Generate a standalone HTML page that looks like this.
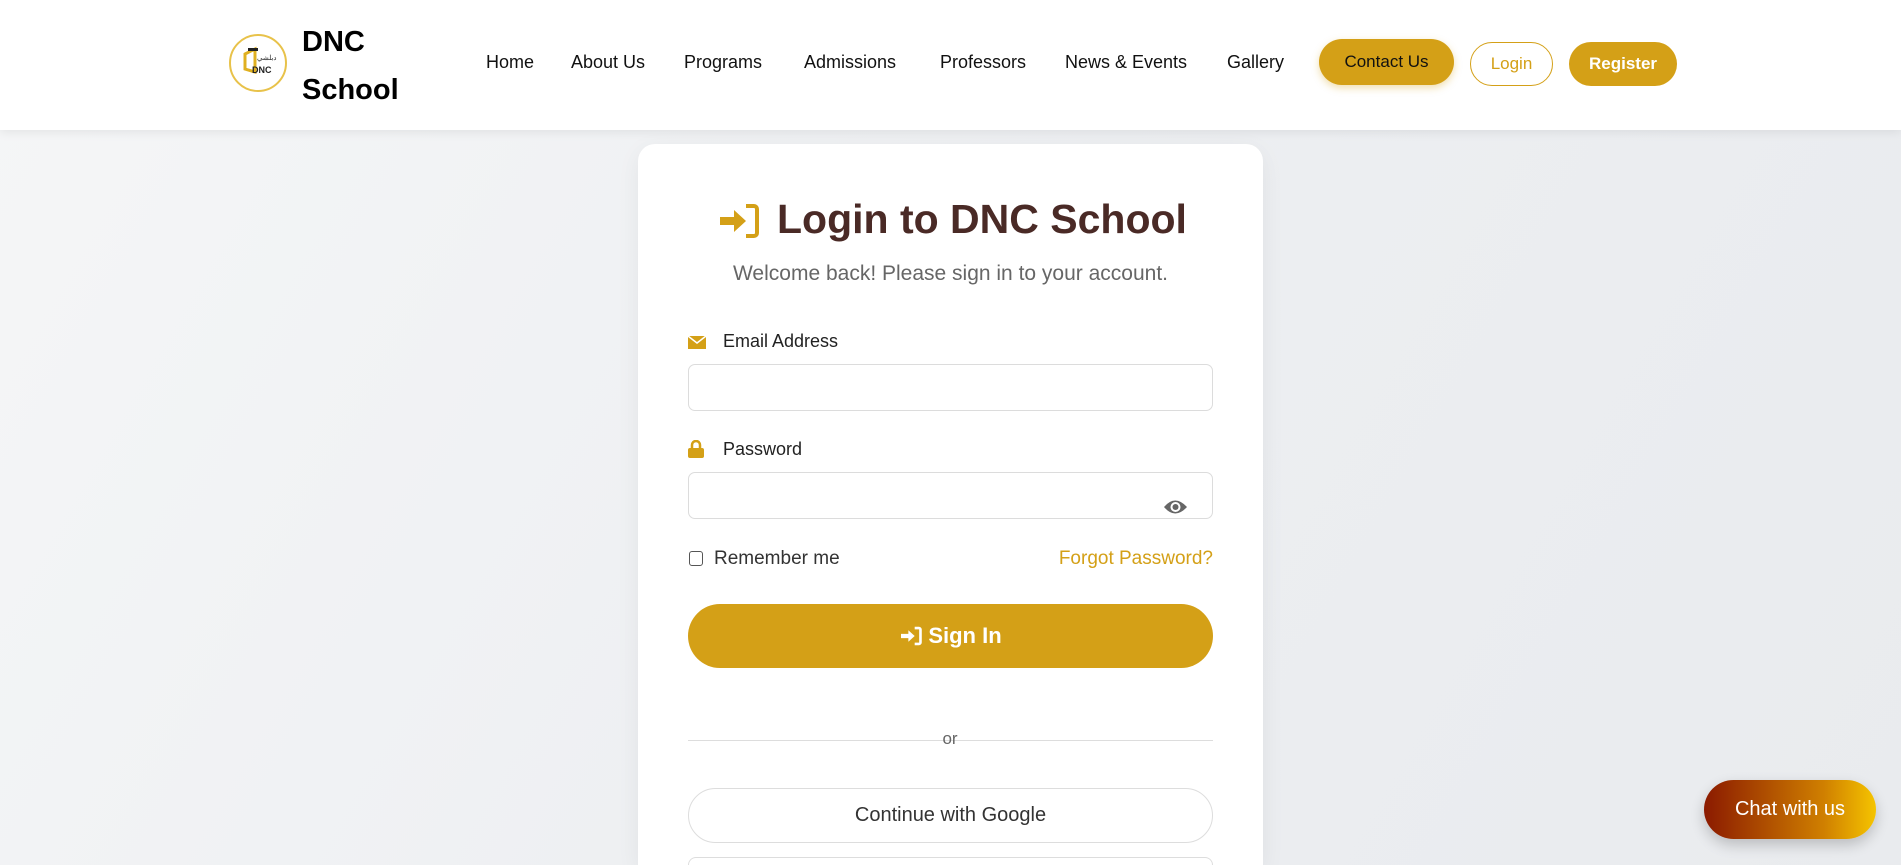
<!DOCTYPE html>
<html style="background:#eef0f2"><head><meta charset="utf-8">
<style>
*{box-sizing:border-box;margin:0;padding:0}
html,body{width:1901px;height:865px;overflow:hidden}
body{font-family:"Liberation Sans",Arial,sans-serif;background:linear-gradient(120deg,#f5f6f7 0%,#eceef1 60%,#e9ebee 100%) no-repeat;background-size:1901px 865px;position:relative}
nav{position:absolute;left:0;top:0;width:1901px;height:130px;background:#fff;box-shadow:0 2px 10px rgba(0,0,0,.08);z-index:2}
.logo{position:absolute;left:229px;top:34px;width:58px;height:58px;border-radius:50%;border:2px solid #e8c24a;background:#fff}
.brand{position:absolute;left:302px;top:18px;font-weight:bold;font-size:29px;line-height:48px;color:#000}
.links a{position:absolute;top:52px;font-size:18px;color:#111;text-decoration:none}
.btn{position:absolute;border-radius:24px;font-size:17px;display:flex;align-items:center;justify-content:center}
.card{position:absolute;left:638px;top:144px;width:625px;height:721px;background:#fff;border-radius:17px 17px 0 0;box-shadow:0 6px 24px rgba(0,0,0,.06)}
.title{position:absolute;top:196px;font-size:41px;font-weight:bold;color:#4a2a26}
.sub{position:absolute;left:638px;width:625px;top:262px;text-align:center;font-size:21px;color:#666}
.lbl{position:absolute;left:723px;font-size:18px;color:#222}
.inp{position:absolute;left:688px;width:525px;height:47px;border:1px solid #dcdcdc;border-radius:7px;background:#fff}
</style></head><body>
<nav>
<div class="logo"><svg width="54" height="54" viewBox="0 0 54 54"><polygon points="14,18 24,13 24,36 14,33" fill="none" stroke="#e0b020" stroke-width="3"/><rect x="17" y="12" width="10" height="3" fill="#222"/><text x="26" y="24" font-size="7" fill="#222">دبلشي</text><text x="21" y="37" font-size="9" font-weight="bold" fill="#222">DNC</text></svg></div>
<div class="brand">DNC<br>School</div>
<div class="links">
<a style="left:486px">Home</a><a style="left:571px">About Us</a><a style="left:684px">Programs</a><a style="left:804px">Admissions</a><a style="left:940px">Professors</a><a style="left:1065px">News &amp; Events</a><a style="left:1227px">Gallery</a>
</div>
<div class="btn" style="left:1319px;top:39px;width:135px;height:46px;background:#d4a017;color:#111;box-shadow:0 3px 8px rgba(212,160,23,.35)">Contact Us</div>
<div class="btn" style="left:1470px;top:42px;width:83px;height:44px;border:1px solid #d4a017;color:#d4a017;background:#fff">Login</div>
<div class="btn" style="left:1569px;top:42px;width:108px;height:44px;background:#d4a017;color:#fff;font-weight:bold">Register</div>
</nav>
<div class="card"></div>
<svg style="position:absolute;left:718px;top:202px" width="42" height="38" viewBox="0 0 42 38"><path d="M2 15h14V8l12 11-12 11v-7H2z" fill="#d4a017"/><path d="M28 4h8a3 3 0 0 1 3 3v24a3 3 0 0 1-3 3h-8" fill="none" stroke="#d4a017" stroke-width="4"/></svg>
<div class="title" style="left:777px">Login to DNC School</div>
<div class="sub">Welcome back! Please sign in to your account.</div>
<svg style="position:absolute;left:688px;top:336px" width="18" height="13"><rect width="18" height="13" fill="#d4a017"/><path d="M0 0l9 7 9-7" fill="none" stroke="#fff" stroke-width="1.5"/></svg>
<div class="lbl" style="top:331px">Email Address</div>
<div class="inp" style="top:364px"></div>
<svg style="position:absolute;left:688px;top:440px" width="16" height="18"><path d="M4 8V5a4 4 0 0 1 8 0v3" fill="none" stroke="#d4a017" stroke-width="2.5"/><rect y="8" width="16" height="10" rx="2" fill="#d4a017"/></svg>
<div class="lbl" style="top:439px">Password</div>
<div class="inp" style="top:472px"></div>
<svg style="position:absolute;left:1163px;top:498px" width="25" height="18"><path d="M1 9Q12 -4 24 9Q12 22 1 9z" fill="#666"/><circle cx="12.5" cy="9" r="5" fill="#fff"/><circle cx="12.5" cy="9" r="3" fill="#666"/></svg>
<div style="position:absolute;left:689px;top:551px;width:14px;height:15px;border:1.5px solid #555;border-radius:3px"></div>
<div style="position:absolute;left:714px;top:548px;font-size:19px;color:#333">Remember me</div>
<div style="position:absolute;right:688px;top:548px;font-size:19px;color:#d4a017">Forgot Password?</div>
<div class="btn" style="left:688px;top:604px;width:525px;height:64px;border-radius:32px;background:#d4a017;color:#fff;font-weight:bold;font-size:22px"><svg width="24" height="20" viewBox="0 0 42 38" style="margin-right:5px"><path d="M2 15h14V8l12 11-12 11v-7H2z" fill="#fff"/><path d="M28 4h8a3 3 0 0 1 3 3v24a3 3 0 0 1-3 3h-8" fill="none" stroke="#fff" stroke-width="5"/></svg>Sign In</div>
<div style="position:absolute;left:688px;top:740px;width:525px;height:1px;background:#ddd"></div>
<div style="position:absolute;left:930px;top:729px;width:40px;text-align:center;font-size:17px;color:#666">or</div>
<div class="btn" style="left:688px;top:788px;width:525px;height:55px;border-radius:28px;border:1.5px solid #ddd;background:#fff;color:#333;font-size:20px">Continue with Google</div>
<div style="position:absolute;left:688px;top:857px;width:525px;height:8px;border-radius:28px 28px 0 0;border:1.5px solid #ddd;border-bottom:none;background:#fff"></div>
<div class="btn" style="left:1704px;top:780px;width:172px;height:59px;border-radius:30px;background:linear-gradient(90deg,#8b1a00,#d08000 70%,#f5c400);color:#fff;font-size:20px;box-shadow:0 6px 14px rgba(0,0,0,.2)">Chat with us</div>
</body></html>
